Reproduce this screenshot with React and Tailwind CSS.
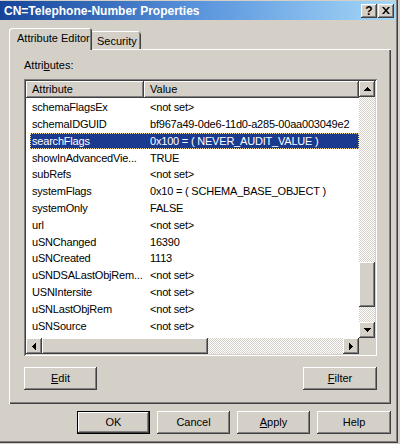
import React from 'react';

const rows = [
  ['schemaFlagsEx', '<not set>'],
  ['schemaIDGUID', 'bf967a49-0de6-11d0-a285-00aa003049e2'],
  ['searchFlags', '0x100 = ( NEVER_AUDIT_VALUE )'],
  ['showInAdvancedVie...', 'TRUE'],
  ['subRefs', '<not set>'],
  ['systemFlags', '0x10 = ( SCHEMA_BASE_OBJECT )'],
  ['systemOnly', 'FALSE'],
  ['url', '<not set>'],
  ['uSNChanged', '16390'],
  ['uSNCreated', '1113'],
  ['uSNDSALastObjRem...', '<not set>'],
  ['USNIntersite', '<not set>'],
  ['uSNLastObjRem', '<not set>'],
  ['uSNSource', '<not set>'],
  ['wbemPath', '<not set>'],
];

// classic 3D borders
const raised = 'shadow-[inset_-1px_-1px_#404040,inset_1px_1px_#ffffff,inset_-2px_-2px_#808080]';
const sunken = 'shadow-[inset_1px_1px_#808080,inset_-1px_-1px_#ffffff,inset_2px_2px_#404040,inset_-2px_-2px_#d4d0c8]';
const checker = 'bg-[image:repeating-conic-gradient(#ffffff_0%_25%,#d4d0c8_0%_50%)] bg-[length:2px_2px]';

function Arrow({ dir }) {
  if (dir === 'up' || dir === 'down') {
    return (
      <svg width="7" height="4" viewBox="0 0 7 4" shapeRendering="crispEdges" className={dir === 'down' ? 'rotate-180' : ''}>
        <path d="M3 0h1v1h1v1h1v1h1v1H0V3h1V2h1V1h1z" fill="#000" />
      </svg>
    );
  }
  return (
    <svg width="4" height="7" viewBox="0 0 4 7" shapeRendering="crispEdges" className={dir === 'left' ? 'rotate-180' : ''}>
      <path d="M0 0h1v1h1v1h1v1h1v1H3v1H2v1H1v1H0z" fill="#000" />
    </svg>
  );
}

function ScrollBtn({ dir }) {
  return (
    <div className={`flex items-center justify-center w-[16px] h-[16px] shrink-0 bg-[#d4d0c8] ${raised}`}>
      <Arrow dir={dir} />
    </div>
  );
}

function Btn({ children, def, w = 'w-[73px]' }) {
  const border = def
    ? 'shadow-[inset_0_0_0_1px_#000000,inset_-2px_-2px_#404040,inset_2px_2px_#ffffff,inset_-3px_-3px_#808080]'
    : raised;
  return (
    <div className={`flex items-center justify-center h-[23px] ${w} bg-[#d4d0c8] ${border}`}>
      <span className="leading-[13px]">{children}</span>
    </div>
  );
}

function TitleButton({ children }) {
  return (
    <div className={`flex items-center justify-center w-[16px] h-[14px] bg-[#d4d0c8] ${raised}`}>
      {children}
    </div>
  );
}

function ListView() {
  return (
    <div className={`mt-[7px] w-[353px] h-[277px] p-[2px] bg-white ${sunken}`}>
      <div className="flex h-full">
        <div className="flex flex-col w-[333px]">
          {/* header */}
          <div className="flex h-[17px] shrink-0">
            <div className={`w-[118px] pl-[6px] flex items-center bg-[#d4d0c8] ${raised}`}>Attribute</div>
            <div className={`flex-1 pl-[6px] flex items-center bg-[#d4d0c8] ${raised}`}>Value</div>
          </div>
          {/* rows */}
          <div className="flex-1 overflow-hidden pt-[1px] tracking-[-0.2px]">
            {rows.map(([name, value], i) => {
              const sel = i === 2;
              return (
                <div
                  key={name}
                  className={`flex items-center h-[16.8px] ml-[3.5px] whitespace-nowrap ${
                    sel ? 'bg-[#1a3a90] text-white outline-1 outline-dotted -outline-offset-1 outline-[#f5db95]' : ''
                  }`}
                >
                  <div className="w-[114.5px] pl-[2.5px] overflow-hidden">{name}</div>
                  <div className="flex-1 pl-[6px] overflow-hidden">{value}</div>
                </div>
              );
            })}
          </div>
          {/* horizontal scrollbar */}
          <div className="flex h-[16px] shrink-0">
            <ScrollBtn dir="left" />
            <div className={`w-[166px] bg-[#d4d0c8] ${raised}`} />
            <div className={`flex-1 ${checker}`} />
            <ScrollBtn dir="right" />
          </div>
        </div>
        {/* vertical scrollbar */}
        <div className="flex flex-col w-[16px]">
          <ScrollBtn dir="up" />
          <div className={`flex-1 flex flex-col ${checker}`}>
            <div className="h-[165px]" />
            <div className={`h-[45px] bg-[#d4d0c8] ${raised}`} />
          </div>
          <ScrollBtn dir="down" />
          <div className="h-[16px] bg-[#d4d0c8]" />
        </div>
      </div>
    </div>
  );
}

export default function App() {
  return (
    <div className="w-[400px] h-[444px] bg-[#d4d0c8] font-['Liberation_Sans',Arial,sans-serif] text-[11px] text-black overflow-hidden">
      <div className="flex flex-col w-[398px] h-[443px] bg-[#d4d0c8] shadow-[inset_-1px_-1px_#404040,inset_-2px_-2px_#808080]">
        {/* Title bar */}
        <div className="flex items-center gap-[1px] h-[19px] mt-[1px] mr-[2px] pl-[4px] pr-[2px] bg-linear-to-r from-[#16449a] via-[#5a94dc] to-[#a6d8f8]">
          <span className="flex-1 text-white font-bold text-[12px] leading-none whitespace-nowrap">
            CN=Telephone-Number Properties
          </span>
          <TitleButton>
            <span className="font-bold text-[12px] leading-none">?</span>
          </TitleButton>
          <TitleButton>
            <svg width="8" height="7" viewBox="0 0 8 7">
              <path d="M0 0h2l2 2.5 2-2.5h2L5 3.5 8 7H6L4 4.5 2 7H0l3-3.5z" fill="#000" />
            </svg>
          </TitleButton>
        </div>

        {/* Tabs */}
        <div className="flex items-end h-[21px] mt-[8px] ml-[9px]">
          <div className="relative z-10 h-[22px] w-[83px] -mb-[1px] rounded-t-[3px] bg-[#d4d0c8] pl-[8px] pt-[4px] leading-[13px] whitespace-nowrap shadow-[inset_1px_1px_#ffffff,inset_-1px_0_#404040,inset_-2px_0_#808080]">
            Attribute Editor
          </div>
          <div className="h-[18px] w-[49px] rounded-tr-[3px] pl-[5px] pt-[4px] leading-[13px] whitespace-nowrap shadow-[inset_0_1px_#ffffff,inset_-1px_0_#404040,inset_-2px_0_#808080]">
            Security
          </div>
        </div>

        {/* Tab panel */}
        <div className="ml-[9px] w-[382px] h-[355px] flex flex-col pl-[15px] pr-[14px] pt-[10px] shadow-[inset_1px_1px_#ffffff,inset_-1px_-1px_#404040,inset_-2px_-2px_#808080]">
          <div className="leading-[13px]">
            Attri<u>b</u>utes:
          </div>
          <ListView />
          <div className="flex justify-between mt-[11px]">
            <Btn w="w-[73px]"><u>E</u>dit</Btn>
            <Btn w="w-[74px]"><u>F</u>ilter</Btn>
          </div>
        </div>

        {/* Dialog buttons */}
        <div className="flex justify-end gap-[7px] mt-[7px] pr-[7px]">
          <Btn def>OK</Btn>
          <Btn>Cancel</Btn>
          <Btn><u>A</u>pply</Btn>
          <Btn w="w-[74px]">Help</Btn>
        </div>
      </div>
    </div>
  );
}
